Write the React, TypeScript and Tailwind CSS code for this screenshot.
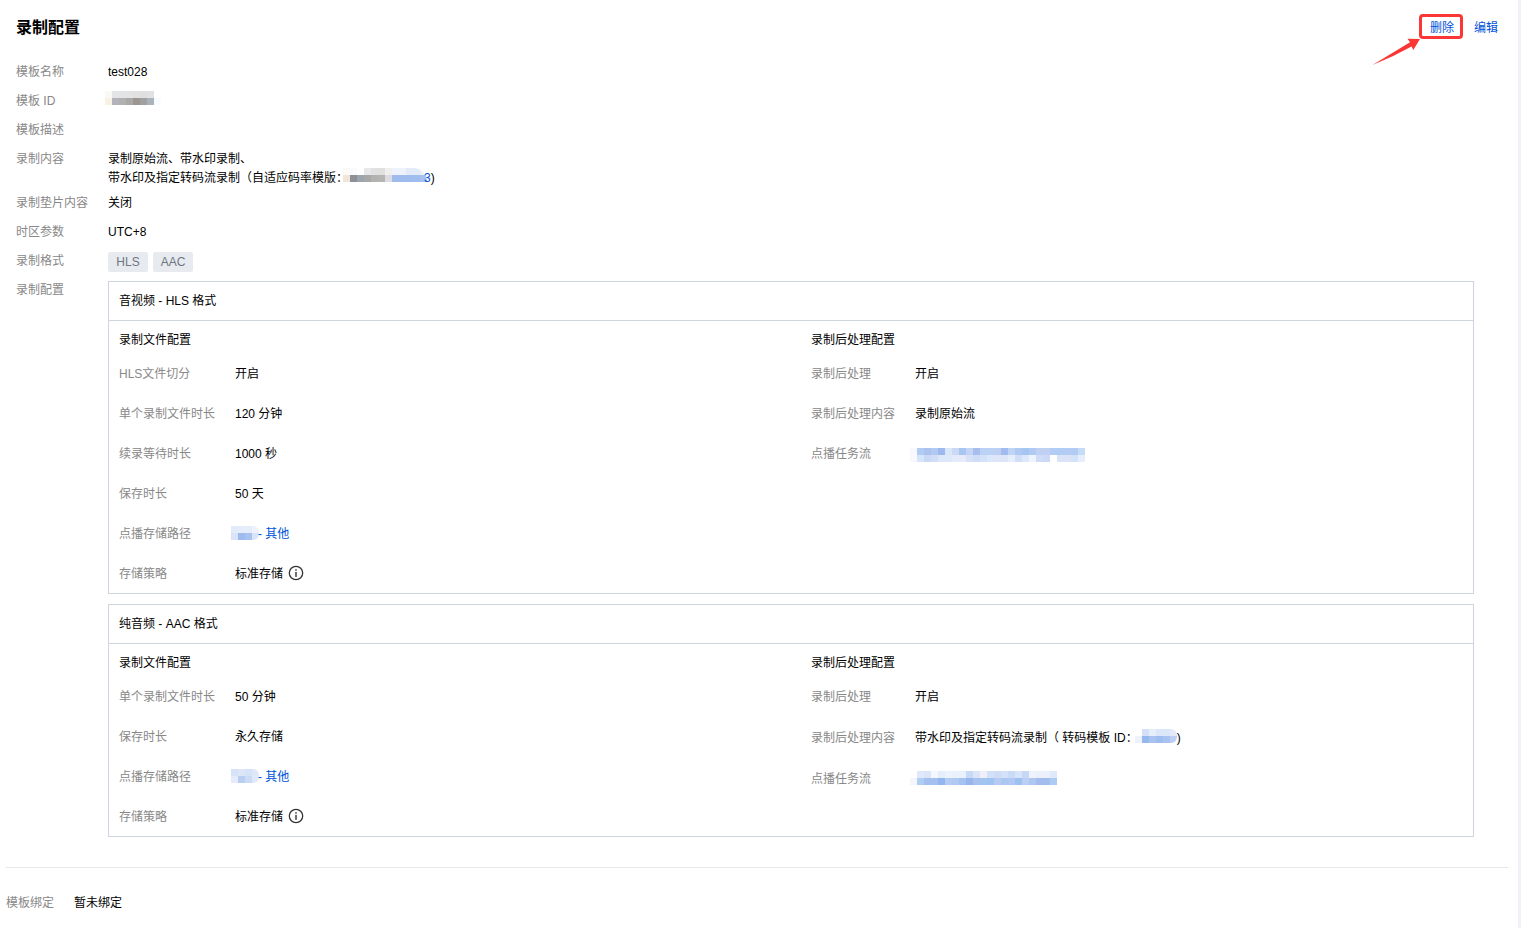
import React from "react";

type MosaicProps = {
  rows: string[][];
  className?: string;
};

const CELL = 7;

// Pixelated block that hides a private value
const Mosaic: React.FC<MosaicProps> = ({ rows, className = "" }) => {
  const width = rows[0].length * CELL;
  const height = rows.length * CELL;
  return (
    <svg
      width={width}
      height={height}
      viewBox={`0 0 ${width} ${height}`}
      shapeRendering="crispEdges"
      aria-hidden="true"
      className={`shrink-0 ${className}`}
    >
      {rows.map((row, y) =>
        row.map((fill, x) => (
          <rect
            key={`${x}-${y}`}
            x={x * CELL}
            y={y * CELL}
            width={CELL}
            height={CELL}
            fill={fill}
          />
        ))
      )}
    </svg>
  );
};

const idMosaic = [
  ["#fbf9f5", "#e4e5e7", "#e2e4e5", "#e3e3e3", "#e1e1e2", "#dfdfdf", "#dfe1e4", "#ffffff"],
  ["#f8f2e4", "#b3b2bd", "#b0b1b0", "#a9aaa5", "#9c9590", "#a0a0a0", "#acb2ba", "#f5fbff"],
];

const contentMosaic = [
  ["#fcf9f6", "#fafbfc", "#ffffff", "#e8e8ea", "#e0e1e2", "#e0e0df", "#efefef", "#edf2fc", "#edf2fc", "#e3ebfa", "#e3ebfa", "#eaf0fc"],
  ["#f2e6d9", "#8d9097", "#9aa5ae", "#a8a9a6", "#b2b2b0", "#b5b5b3", "#dcdce2", "#a0bbee", "#a0bbee", "#9fbcef", "#a0bdf0", "#a4c2f0"],
];

const pathMosaic = [
  ["#e3ebfa", "#e5edfb", "#e5edfb", "#edf2fc"],
  ["#dbe4f6", "#9dbbee", "#a9c3f0", "#d9e4f8"],
];

const audioPathMosaic = [
  ["#d6e2f7", "#dce6f9", "#d6e2f7", "#dfe8f9"],
  ["#e5ebfa", "#b8cef2", "#cbdaf5", "#e0e8f9"],
];

const transcodeMosaic = [
  ["#ffffff", "#d3e0f7", "#e6eefb", "#dce6f9", "#dbe6f9", "#e2eafa"],
  ["#eef2fc", "#97b8ee", "#a9c3f0", "#a0bdf0", "#a9c3f0", "#bccff3"],
];

const taskMosaic = [
  ["#f8f8fe", "#b1ccf3", "#aec2ef", "#b0caf2", "#9db9ee", "#dae7f9", "#ccd9f5", "#a8c6f2", "#c4d4f5", "#a8beef", "#bcd2f5", "#bcd2f5", "#bdd0f4", "#a1bcee", "#bed3f5", "#aec9f2", "#a5c5f2", "#b0cbf3", "#bfd0f3", "#bfd0f3", "#b2cdf4", "#b2cdf4", "#b4cbf3", "#b0ccf3", "#c6dbf7"],
  ["#f8f8fe", "#d5e6fa", "#c9d8f5", "#cfddf6", "#dee7f9", "#dce9fa", "#e5eafa", "#e6ebfb", "#d6e0f7", "#cfdcf6", "#d4e2f9", "#dbe7fa", "#dde6f9", "#dde6f9", "#e5eefb", "#d1def7", "#dde9fb", "#edf4fd", "#cfdcf7", "#cbd8f6", "#ffffff", "#dae4f8", "#dbe3f8", "#d1e2f9", "#e4eefc"],
];

const audioTaskMosaic = [
  ["#ffffff", "#dfe9fa", "#dbe4f8", "#f3f8fe", "#e5eefb", "#edf3fd", "#e9f1fc", "#e9f1fc", "#c7d9f6", "#dce5f8", "#eeeffb", "#d1e1f8", "#cfdcf6", "#d4e1f8", "#c9daf6", "#d8e4f9", "#c6d8f5", "#edf2fd", "#eaf1fc", "#eaf1fc", "#deeafa"],
  ["#f5f5fc", "#b0cdf3", "#a4c0ef", "#a3c0ef", "#92b6ed", "#b3ccf2", "#b2caf2", "#a4c3f0", "#99b6ec", "#a8c2f0", "#a2c4f0", "#9ec5f2", "#b7caf2", "#aac8f1", "#afc9f2", "#9ec2ef", "#bacff3", "#adc7f1", "#a3bdee", "#a3bdee", "#acccf3"],
];

const InfoIcon: React.FC = () => (
  <svg width="16" height="16" viewBox="0 0 16 16" className="mb-[2px] ml-[5px]" aria-hidden="true">
    <circle cx="8" cy="8" r="6.7" fill="none" stroke="#333" strokeWidth="1.3" />
    <rect x="7.3" y="4.2" width="1.4" height="1.5" fill="#333" />
    <rect x="7.3" y="6.9" width="1.4" height="5" fill="#333" />
  </svg>
);

const Row: React.FC<{
  label: string;
  className?: string;
  children?: React.ReactNode;
}> = ({ label, className = "pb-[9px]", children }) => (
  <div className={`flex items-start ${className}`}>
    <dt className="w-[92px] shrink-0 text-[#888]">{label}</dt>
    <dd className="min-w-0 flex-1">{children}</dd>
  </div>
);

const Field: React.FC<{
  label: string;
  wide?: boolean;
  className?: string;
  children?: React.ReactNode;
}> = ({ label, wide = false, className = "h-10", children }) => (
  <div className={`flex items-center pt-[2px] ${className}`}>
    <dt className={`shrink-0 text-[#888] ${wide ? "w-[116px]" : "w-[104px]"}`}>
      {label}
    </dt>
    <dd className="flex items-center">{children}</dd>
  </div>
);

const Card: React.FC<{
  title: string;
  left: React.ReactNode;
  right: React.ReactNode;
}> = ({ title, left, right }) => (
  <section className="border border-[#cfd5de]">
    <h2 className="flex h-[39px] items-center border-b border-[#cfd5de] px-[10px]">
      {title}
    </h2>
    <div className="grid grid-cols-2 gap-10 px-[10px] pt-[9px]">
      <div>
        <h3 className="mb-[3px]">录制文件配置</h3>
        <dl>{left}</dl>
      </div>
      <div>
        <h3 className="mb-[3px]">录制后处理配置</h3>
        <dl>{right}</dl>
      </div>
    </div>
  </section>
);

const StoragePath: React.FC<{ rows: string[][] }> = ({ rows }) => (
  <a href="#storage" className="-ml-1 flex items-center text-[#0052d9]">
    <Mosaic rows={rows} className="-mr-px mb-[3px] rounded-r-md" />
    <span>- 其他</span>
  </a>
);

const App: React.FC = () => {
  return (
    <main className="min-h-screen border-r-[3px] border-[#f1f1f7] bg-white pr-[10px] pl-[6px] font-['Liberation_Sans','Noto_Sans_CJK_SC',sans-serif] text-[12px] leading-5 text-black">
      <div className="border-b border-[#e7e8eb] px-[10px] pt-4 pb-[30px]">
        <header className="mb-[22px] flex h-6 items-center justify-between">
          <h1 className="text-base font-bold">录制配置</h1>
          <div className="flex gap-5 text-[#0052d9]">
            <div className="relative">
              <button type="button" className="cursor-pointer">
                删除
              </button>
              <span className="pointer-events-none absolute -top-1 -right-[9px] -bottom-px -left-[11px] rounded-[4px] border-3 border-[#fb3736]" />
              <svg
                width="50"
                height="30"
                viewBox="0 0 50 30"
                className="pointer-events-none absolute top-[19px] right-[33px]"
                aria-hidden="true"
              >
                <path
                  d="M1.5 28 L39 5.3 L36.5 1.8 L49 2 L42.3 13 L40.5 9.5 Q22 20 1.5 28 Z"
                  fill="#fb3736"
                />
              </svg>
            </div>
            <button type="button" className="cursor-pointer">
              编辑
            </button>
          </div>
        </header>

        <dl>
          <Row label="模板名称">test028</Row>
          <Row label="模板 ID">
            <Mosaic rows={idMosaic} className="-ml-[3px]" />
          </Row>
          <Row label="模板描述" />
          <Row label="录制内容" className="pb-[5px]">
            <div className="pt-px leading-[19px]">
              <p>录制原始流、带水印录制、</p>
              <p className="flex">
                <span>带水印及指定转码流录制（自适应码率模版：</span>
                <Mosaic rows={contentMosaic} className="-mt-px -ml-[5px] rounded-tr-2xl" />
                <a href="#template" className="-ml-[3px] text-[#0052d9]">
                  3
                </a>
                <span>)</span>
              </p>
            </div>
          </Row>
          <Row label="录制垫片内容">关闭</Row>
          <Row label="时区参数">UTC+8</Row>
          <Row label="录制格式" className="h-[29px]">
            <div className="mt-px flex gap-[5px] text-[#6e7681]">
              <span className="w-10 rounded-[2px] bg-[#e7eaef] text-center">HLS</span>
              <span className="w-10 rounded-[2px] bg-[#e7eaef] text-center">AAC</span>
            </div>
          </Row>
          <Row label="录制配置" className="pb-0">
            <div className="mt-px mr-6 flex flex-col gap-[10px]">
              <Card
                title="音视频 - HLS 格式"
                left={
                  <>
                    <Field wide label="HLS文件切分">开启</Field>
                    <Field wide label="单个录制文件时长">120 分钟</Field>
                    <Field wide label="续录等待时长">1000 秒</Field>
                    <Field wide label="保存时长">50 天</Field>
                    <Field wide label="点播存储路径">
                      <StoragePath rows={pathMosaic} />
                    </Field>
                    <Field wide label="存储策略">
                      标准存储
                      <InfoIcon />
                    </Field>
                  </>
                }
                right={
                  <>
                    <Field label="录制后处理">开启</Field>
                    <Field label="录制后处理内容">录制原始流</Field>
                    <Field label="点播任务流">
                      <Mosaic rows={taskMosaic} className="-ml-[5px] mt-[2px]" />
                    </Field>
                  </>
                }
              />
              <Card
                title="纯音频 - AAC 格式"
                left={
                  <>
                    <Field wide label="单个录制文件时长">50 分钟</Field>
                    <Field wide label="保存时长">永久存储</Field>
                    <Field wide label="点播存储路径">
                      <StoragePath rows={audioPathMosaic} />
                    </Field>
                    <Field wide label="存储策略">
                      标准存储
                      <InfoIcon />
                    </Field>
                  </>
                }
                right={
                  <>
                    <Field label="录制后处理">开启</Field>
                    <Field label="录制后处理内容" className="h-[42px]">
                      <span>带水印及指定转码流录制（ 转码模板 ID：</span>
                      <Mosaic rows={transcodeMosaic} className="-ml-[3px] mb-[5px] rounded-r-md" />
                      <span>)</span>
                    </Field>
                    <Field label="点播任务流">
                      <Mosaic rows={audioTaskMosaic} className="-ml-[5px] mb-[3px]" />
                    </Field>
                  </>
                }
              />
            </div>
          </Row>
        </dl>
      </div>

      <dl className="flex gap-5 pt-[25px] pb-4">
        <dt className="text-[#888]">模板绑定</dt>
        <dd>暂未绑定</dd>
      </dl>
    </main>
  );
};

export default App;
